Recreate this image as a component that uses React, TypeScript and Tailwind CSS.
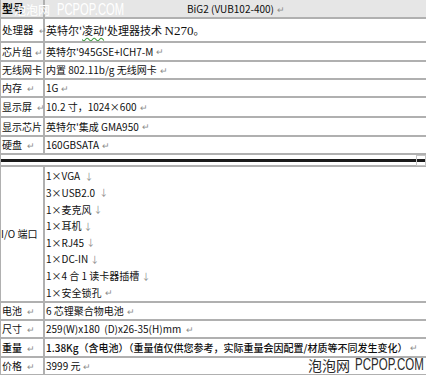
import type { ReactNode } from 'react';

// paragraph mark / line break marks as shown in Word
function Mark({ tight }: { tight?: boolean }) {
  return <span className={`${tight ? 'ml-0' : 'ml-[3px]'} text-[9px] leading-none text-[#8c8c8c]`}>↵</span>;
}

function Brk() {
  return <span className="ml-[2px] text-[9px] leading-none text-[#8c8c8c]">↓</span>;
}

function Row({
  label,
  children,
  className,
}: {
  label: ReactNode;
  children: ReactNode;
  className: string;
}) {
  return (
    <div className={`flex border-b-2 border-[#b0b0b0] ${className}`}>
      <div className="flex w-[44px] shrink-0 items-center whitespace-nowrap border-r-2 border-[#b0b0b0] pl-[1px]">
        {label}
      </div>
      <div className="flex min-w-0 flex-1 items-center whitespace-nowrap pl-[1px]">{children}</div>
    </div>
  );
}

const ioLines = ['1×VGA ', '3×USB2.0 ', '1×麦克风', '1×耳机', '1×RJ45', '1×DC-IN', '1×4 合 1 读卡器插槽'];

export default function App() {
  return (
    <div className="relative h-[375px] w-[426px] overflow-hidden border-l border-[#b0b0b0] bg-white font-['Noto_Sans_CJK_SC',sans-serif] text-[10px] leading-none text-[#0f0f0f]">
      {/* Header */}
      <Row className="h-[19px] bg-[#e6e6e6]" label={<span className="text-[11px] font-bold">型号</span>}>
        <span className="w-full text-center">
          BiG2 (VUB102-400)
          <Mark />
        </span>
      </Row>

      <Row
        className="h-[24px]"
        label={
          <span className="text-[10.5px]">
            处理器 <Mark />
          </span>
        }
      >
        <span className="text-[11px]">
          英特尔'<span className="underline decoration-[#3c9a3c] decoration-wavy underline-offset-2">凌动</span>'处理器技术{' '}
          <span className="font-['Liberation_Serif',serif] text-[13px]">N270</span>。
        </span>
      </Row>

      <Row
        className="h-[19px]"
        label={
          <span>
            芯片组
            <Mark />
          </span>
        }
      >
        英特尔'945GSE+ICH7-M
        <Mark />
      </Row>

      <Row className="h-[18px]" label={<span>无线网卡</span>}>
        内置 802.11b/g 无线网卡
        <Mark />
      </Row>

      <Row className="h-[18px]" label={<span>内存 <Mark /></span>}>
        1G
        <Mark />
      </Row>

      <Row className="h-[20px]" label={<span>显示屏 <Mark /></span>}>
        10.2 寸，1024×600
        <Mark />
      </Row>

      <Row className="h-[19px]" label={<span>显示芯片</span>}>
        英特尔'集成 GMA950
        <Mark />
      </Row>

      <Row className="h-[18px]" label={<span>硬盘 <Mark /></span>}>
        160GBSATA
        <Mark />
      </Row>

      {/* thick separator */}
      <div className="flex h-[10px] flex-col justify-center">
        <div className="h-[3px] bg-[#1a1a1a]" />
      </div>
      <div className="absolute right-0 top-[155px] h-[11px] w-[10px] border border-[#c4c4c4]" />

      {/* I/O */}
      <div className="flex h-[138px] border-y-2 border-[#b0b0b0]">
        <div className="flex w-[44px] shrink-0 items-center whitespace-nowrap border-r-2 border-[#b0b0b0]">
          I/O 端口
        </div>
        <div className="flex flex-1 flex-col pl-[1px] pt-[1px]">
          {ioLines.map((l) => (
            <div key={l} className="flex h-[16.7px] items-center whitespace-pre">
              {l}
              <Brk />
            </div>
          ))}
          <div className="flex h-[16.7px] items-center">
            1×安全锁孔
            <Mark />
          </div>
        </div>
      </div>

      <Row className="h-[18px]" label={<span>电池 <Mark /></span>}>
        6 芯锂聚合物电池
        <Mark />
      </Row>

      <Row className="h-[18px]" label={<span>尺寸 <Mark /></span>}>
        <span className="whitespace-pre">259(W)x180  (D)x26-35(H)mm </span>
        <Mark />
      </Row>

      <Row className="h-[19px]" label={<span className="font-medium">重量 <Mark /></span>}>
        <span className="font-medium">
          1.38Kg（含电池）（重量值仅供您参考，实际重量会因配置/材质等不同发生变化）
        </span>
        <Mark />
      </Row>

      <Row className="h-[18px] border-b-0" label={<span>价格 <Mark /></span>}>
        3999 元
        <Mark />
      </Row>

      {/* watermarks */}
      <div className="pointer-events-none absolute left-[13px] top-[2px] flex items-center whitespace-nowrap leading-none text-white">
        <span className="text-[12px]">泡泡网</span>
        <span className="ml-[7px] origin-left scale-x-[0.7] font-['Liberation_Sans',sans-serif] text-[16px]">
          PCPOP.COM
        </span>
      </div>
      <div className="pointer-events-none absolute left-[307px] top-[357px] flex w-[160px] items-center whitespace-nowrap leading-none text-[#2a2a2a]">
        <span className="shrink-0 text-[14px]">泡泡网</span>
        <span className="ml-[5px] shrink-0 origin-left scale-x-[0.72] font-['Liberation_Sans',sans-serif] text-[16px]">
          PCPOP.COM
        </span>
      </div>
    </div>
  );
}
